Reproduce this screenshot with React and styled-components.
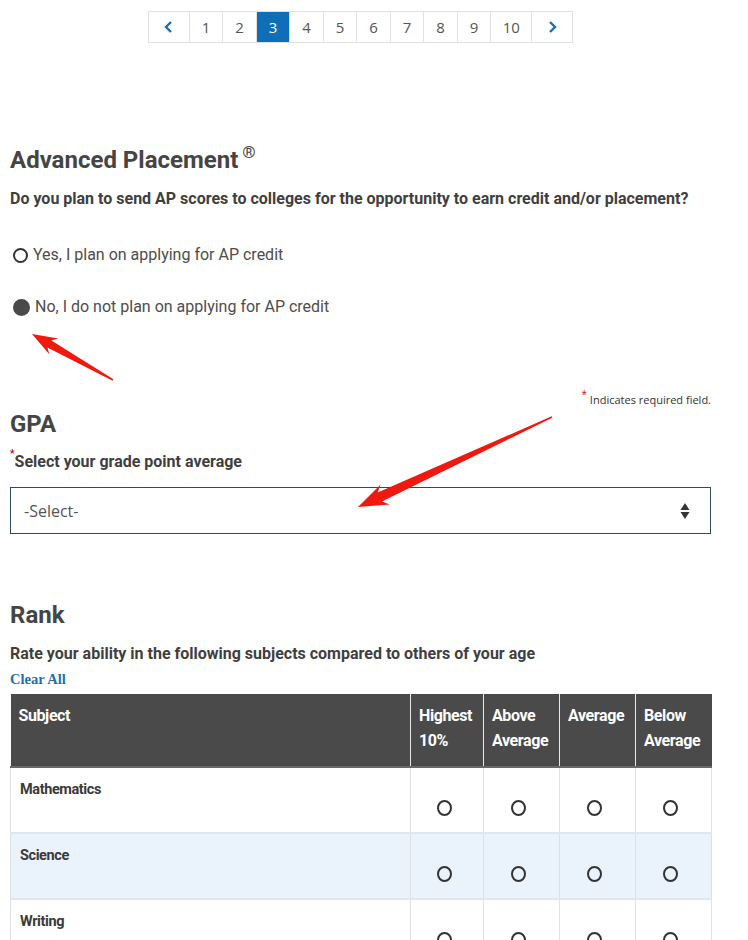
import React from "react";
import styled, { createGlobalStyle } from "styled-components";

const GlobalStyle = createGlobalStyle`
  body {
    margin: 0;
    background: #fff;
    font-family: "Roboto", "Liberation Sans", sans-serif;
    color: #4a4a4a;
  }
`;

const Page = styled.div`
  position: relative;
  width: 701px;
  padding: 0 37px 40px 10px;
`;

const Pager = styled.nav`
  display: flex;
  justify-content: center;
  margin-top: 11px;
`;

const PageList = styled.ul`
  display: flex;
  list-style: none;
  margin: 0;
  padding: 0;
  border: 1px solid #e1e1e1;
  border-right: none;
`;

const PageItem = styled.li`
  width: ${(p) => (p.$wide ? "41px" : "33.5px")};
  height: 30px;
  display: flex;
  align-items: center;
  justify-content: center;
  border-right: 1px solid #e1e1e1;
  box-sizing: border-box;
  font-family: "Open Sans", "Liberation Sans", sans-serif;
  font-size: 15px;
  color: ${(p) => (p.$active ? "#fff" : "#555")};
  background: ${(p) => (p.$active ? "#0e6eb8" : "#fff")};
`;

const Heading = styled.h2`
  margin: ${(p) => p.$mt || 0}px 0 0;
  font-size: 24px;
  line-height: 30px;
  height: 30px;
  font-weight: 700;
  color: #454545;
`;

const Reg = styled.sup`
  font-size: 17px;
  font-weight: 400;
  line-height: 0;
  margin-left: 4px;
  vertical-align: 0;
  position: relative;
  top: -10px;
`;

const Question = styled.p`
  margin: ${(p) => p.$mt || 0}px 0 0;
  font-size: 16px;
  line-height: 20px;
  font-weight: 700;
  color: #3f3f3f;
`;

const Star = styled.span`
  color: #d0021b;
  font-size: 10px;
  line-height: 0;
  vertical-align: top;
  position: relative;
  top: 2px;
`;

const RadioGroup = styled.div`
  display: flex;
  flex-direction: column;
  gap: 28px;
  margin-top: 34px;
`;

const RadioRow = styled.label`
  display: flex;
  align-items: center;
  gap: 5px;
  font-size: 16px;
  line-height: 24px;
  color: #4d4d4d;
  padding-left: 3px;
`;

const Dot = styled.span`
  width: ${(p) => (p.$checked ? "17px" : "15px")};
  height: ${(p) => (p.$checked ? "17px" : "15px")};
  box-sizing: border-box;
  border-radius: 50%;
  border: 2px solid ${(p) => (p.$checked ? "#4a4a4a" : "#333")};
  background: ${(p) => (p.$checked ? "#4a4a4a" : "#fff")};
  flex: none;
`;

const RequiredNote = styled.div`
  margin-top: 73px;
  text-align: right;
  font-family: "Open Sans", "Liberation Sans", sans-serif;
  font-size: 11px;
  line-height: 16px;
  color: #333;
`;

const SelectBox = styled.div`
  margin-top: 15px;
  height: 47px;
  box-sizing: border-box;
  border: 1px solid #2e4b5e;
  display: flex;
  align-items: center;
  justify-content: space-between;
  padding: 0 20px 0 13px;
  font-family: "Open Sans", "Liberation Sans", sans-serif;
  font-size: 16px;
  color: #555;
`;

const ClearAll = styled.a`
  display: block;
  margin-top: 6px;
  font-family: "Liberation Serif", "DejaVu Serif", serif;
  font-weight: 700;
  font-size: 14.5px;
  line-height: 18px;
  color: #1f6fae;
`;

const Table = styled.table`
  margin-top: 6px;
  width: 701px;
  border-collapse: collapse;
  table-layout: fixed;
`;

const Th = styled.th`
  width: ${(p) => p.$w}px;
  background: #4a4a4a;
  color: #fff;
  text-align: left;
  vertical-align: top;
  padding: 9px 6px 9px 8px;
  height: 73px;
  box-sizing: border-box;
  font-family: "Roboto", sans-serif;
  font-size: 16px;
  line-height: 25px;
  letter-spacing: -0.4px;
  font-weight: 700;
  border-left: 1px solid #e8e8e8;
  border-bottom: 2px solid #6a6a6a;
  &:first-child {
    border-left: none;
  }
`;

const Tr = styled.tr`
  background: ${(p) => (p.$alt ? "#eaf2fb" : "#fff")};
`;

const Td = styled.td`
  height: 66px;
  box-sizing: border-box;
  vertical-align: top;
  padding: 12px 8px 0 9px;
  border: 1px solid #dde1e5;
  border-bottom: 2px solid #dfe6ee;
  font-family: "Roboto", sans-serif;
  font-weight: 700;
  font-size: 14.5px;
  letter-spacing: -0.4px;
  line-height: 20px;
  color: #3a3a3a;
`;

const RadioCell = styled.td`
  height: 66px;
  box-sizing: border-box;
  vertical-align: top;
  text-align: center;
  padding: 32px 6px 0 0;
  border: 1px solid #dde1e5;
  border-bottom: 2px solid #dfe6ee;
`;

const SmallRadio = styled.span`
  display: inline-block;
  width: 15px;
  height: 16px;
  box-sizing: border-box;
  border: 2px solid #333;
  border-radius: 50%;
`;

const Overlay = styled.svg`
  position: absolute;
  left: 0;
  top: 0;
  pointer-events: none;
`;

const arrowPoints = (tip, tail, headLen, headHalf, shaftHalf) => {
  const dx = tail[0] - tip[0];
  const dy = tail[1] - tip[1];
  const len = Math.hypot(dx, dy);
  const ux = dx / len;
  const uy = dy / len;
  const nx = -uy;
  const ny = ux;
  const bx = tip[0] + ux * headLen;
  const by = tip[1] + uy * headLen;
  const back = headLen * 0.25;
  const pts = [
    [tip[0], tip[1]],
    [bx + ux * back + nx * headHalf, by + uy * back + ny * headHalf],
    [bx + nx * shaftHalf, by + ny * shaftHalf],
    [tail[0] + nx * 0.8, tail[1] + ny * 0.8],
    [tail[0] - nx * 0.8, tail[1] - ny * 0.8],
    [bx - nx * shaftHalf, by - ny * shaftHalf],
    [bx + ux * back - nx * headHalf, by + uy * back - ny * headHalf],
  ];
  return pts.map((p) => p.map((v) => v.toFixed(1)).join(",")).join(" ");
};

const Chevron = ({ dir }) => (
  <svg width="12" height="14" viewBox="0 0 12 14">
    <path
      d={dir === "left" ? "M8 2 L3 7 L8 12" : "M4 2 L9 7 L4 12"}
      fill="none"
      stroke="#1a6fb0"
      strokeWidth="2.4"
    />
  </svg>
);

const subjects = ["Mathematics", "Science", "Writing"];

const App = () => {
  return (
    <>
      <GlobalStyle />
      <Page>
        <Pager>
          <PageList>
            <PageItem $wide>
              <Chevron dir="left" />
            </PageItem>
            {[1, 2, 3, 4, 5, 6, 7, 8, 9].map((n) => (
              <PageItem key={n} $active={n === 3}>
                {n}
              </PageItem>
            ))}
            <PageItem $wide>10</PageItem>
            <PageItem $wide>
              <Chevron dir="right" />
            </PageItem>
          </PageList>
        </Pager>

        <Heading $mt={102}>
          Advanced Placement<Reg>®</Reg>
        </Heading>
        <Question $mt={14}>
          Do you plan to send AP scores to colleges for the opportunity to earn
          credit and/or placement?
        </Question>
        <RadioGroup>
          <RadioRow>
            <Dot />
            Yes, I plan on applying for AP credit
          </RadioRow>
          <RadioRow>
            <Dot $checked />
            No, I do not plan on applying for AP credit
          </RadioRow>
        </RadioGroup>

        <RequiredNote>
          <Star>*</Star> Indicates required field.
        </RequiredNote>
        <Heading $mt={1}>GPA</Heading>
        <Question $mt={13}>
          <Star>*</Star>Select your grade point average
        </Question>
        <SelectBox>
          <span>-Select-</span>
          <svg width="10" height="18" viewBox="0 0 10 18">
            <path d="M5 1 L9.5 8 L0.5 8 Z" fill="#333" />
            <path d="M0.5 10 L9.5 10 L5 17 Z" fill="#333" />
          </svg>
        </SelectBox>

        <Heading $mt={66}>Rank</Heading>
        <Question $mt={14}>
          Rate your ability in the following subjects compared to others of your
          age
        </Question>
        <ClearAll>Clear All</ClearAll>
        <Table>
          <thead>
            <tr>
              <Th $w={400}>Subject</Th>
              <Th $w={73}>Highest 10%</Th>
              <Th $w={76}>Above Average</Th>
              <Th $w={76}>Average</Th>
              <Th $w={76}>Below Average</Th>
            </tr>
          </thead>
          <tbody>
            {subjects.map((s, i) => (
              <Tr key={s} $alt={i === 1}>
                <Td>{s}</Td>
                {[0, 1, 2, 3].map((c) => (
                  <RadioCell key={c}>
                    <SmallRadio />
                  </RadioCell>
                ))}
              </Tr>
            ))}
          </tbody>
        </Table>

        <Overlay width="748" height="940" viewBox="0 0 748 940">
          <polygon
            points={arrowPoints([32, 323], [113, 369], 20, 9, 4)}
            fill="#f0190f"
          />
          <polygon
            points={arrowPoints([358, 496], [552, 406], 24, 11, 5)}
            fill="#f0190f"
          />
        </Overlay>
      </Page>
    </>
  );
};

export default App;
